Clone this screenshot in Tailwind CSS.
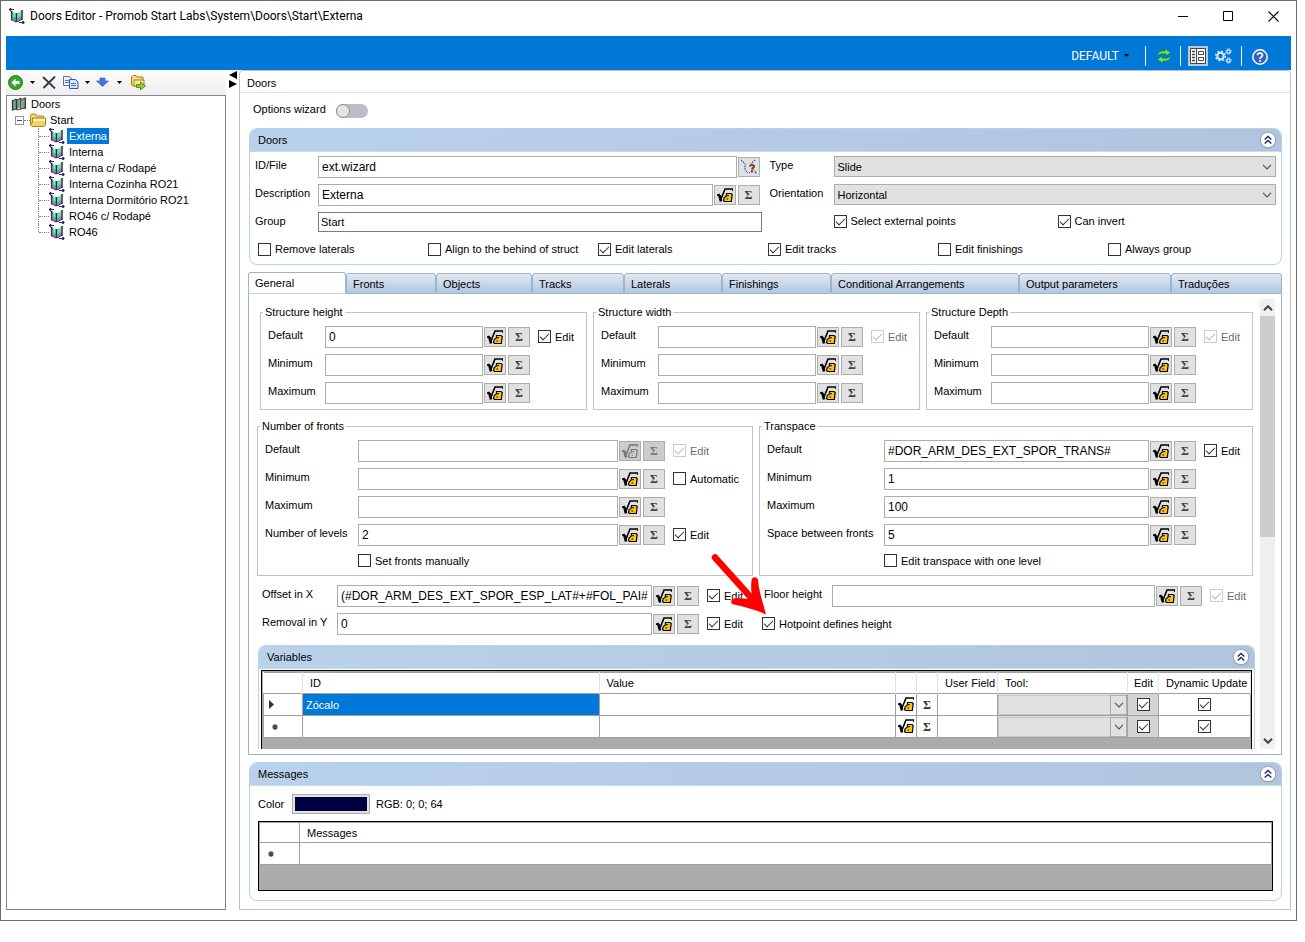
<!DOCTYPE html>
<html lang="en">
<head>
  <meta charset="UTF-8" />
  <meta name="viewport" content="width=device-width, initial-scale=1.0"/>
  <title>Doors Editor</title>
  <script src="https://cdn.jsdelivr.net/npm/@tailwindcss/browser@4"></script>
</head>
<body class="bg-white text-black font-['Liberation_Sans',Arial,sans-serif] text-[11px] leading-[14px] [&_input[type=checkbox]]:appearance-none [&_input[type=checkbox]]:size-[13px] [&_input[type=checkbox]]:shrink-0 [&_input[type=checkbox]]:border [&_input[type=checkbox]]:border-[#333] [&_input[type=checkbox]]:bg-white [&_input[type=checkbox]]:grid [&_input[type=checkbox]]:justify-center [&_input[type=checkbox]:disabled]:border-[#ccc] [&_input[type=checkbox]:checked]:before:content-[''] [&_input[type=checkbox]:checked]:before:block [&_input[type=checkbox]:checked]:before:w-[9px] [&_input[type=checkbox]:checked]:before:h-[5px] [&_input[type=checkbox]:checked]:before:mt-[2px] [&_input[type=checkbox]:checked]:before:border-l [&_input[type=checkbox]:checked]:before:border-b [&_input[type=checkbox]:checked]:before:border-[#333] [&_input[type=checkbox]:checked:disabled]:before:border-[#bbb] [&_input[type=checkbox]:checked]:before:-rotate-45">

  <!-- shared icons -->
  <svg class="hidden">
    <symbol id="door" viewBox="0 0 16 16">
      <path d="M3 3.500l4 2v8l-4-2zM8 5.500l4.500-3v8.500L8 14z" fill="#4df0c0"/>
      <path d="M4 9l3 1v3.500l-3-2zM9 10l3.500-2.500V11L9 13.500z" fill="#45a5e0"/>
      <path d="M2.700 3v9.500M7.500 5v9M13 2v10" stroke="#7a1216" stroke-width="1.500" fill="none"/>
      <path d="M3 12l4 2M8 14l5-3" stroke="#7a1216"/>
      <path d="M0 1.500h5M2 0L.5 1.500 2 3M10 14.500h5.500M13.500 13l1.500 1.500-1.500 1.500" stroke="#10208a" stroke-width="1.200" fill="none"/>
    </symbol>
    <symbol id="root" viewBox="0 0 16 16">
      <path d="M2 4l3-1v10l-3 1zM6 4l3-2v10l-3 1zM11 3l3-1v10l-3 1z" fill="#5fae9a"/>
      <path d="M1.500 4v10.500M5.500 3v11M9.800 2v11M14.300 1.500v11.500" stroke="#6b1d1d" stroke-width="1.300"/>
      <path d="M1 5l4-2M6 4l4-2M10 4l4-2M1 14l4-1M6 14l4-1M10 13l4-1" stroke="#444" stroke-width="1"/>
    </symbol>
    <symbol id="folder" viewBox="0 0 16 14">
      <path d="M.5 12V2.500l1-1.500h4l1.500 2h6.500v2" fill="#f5d56b" stroke="#a8842a"/>
      <path d="M2.500 5h13v7l-1.500 1.500H2L.5 12 2.500 9z" fill="#f5d264" stroke="#a8842a"/>
      <path d="M3 6h12v2H3z" fill="#fdf3bd"/>
    </symbol>
    <symbol id="fx" viewBox="0 0 16 15">
      <path d="M0 7.500l2-1 2 4.500L8 1h8v2" fill="none" stroke="currentColor" stroke-width="1.600"/>
      <path d="M2.300 7L4 13.500" stroke="currentColor" stroke-width="2.600"/>
      <path d="M9.500 5.500h4.500l1.200 1-.9 7H7.500L6.500 12.500l.7-3 2-1.300z" fill="var(--tone,#ffc20e)" stroke="currentColor" stroke-width="1.200"/>
      <path d="M10.200 7.600h1.600M9.500 11h1.600" stroke="currentColor" stroke-width="1.200"/>
    </symbol>
    <symbol id="up" viewBox="0 0 18 18">
      <circle cx="9" cy="9.500" r="8" fill="#7f8aa5" opacity=".55"/>
      <circle cx="9" cy="9" r="7.700" fill="#fff" stroke="#8d93a5" stroke-width=".8"/>
      <path d="M5.700 8.500L9 5.500l3.300 3M5.700 12.500L9 9.500l3.300 3" fill="none" stroke="#1f2d6b" stroke-width="1.500"/>
    </symbol>
    <symbol id="chev" viewBox="0 0 10 6"><path d="M1 .8l4 4 4-4" fill="none" stroke="#555" stroke-width="1.200"/></symbol>
    <symbol id="caret" viewBox="0 0 5 3"><path d="M0 0h5L2.500 3z"/></symbol>
  </svg>

  <div class="mr-2 border border-[#6a6a6a] pb-[10px]">
    <!-- title bar -->
    <header class="flex h-[35px] items-center pl-2 pr-[17px] pb-[5px]">
      <svg class="size-4"><use href="#door"/></svg>
      <h1 class="ml-[5px] flex-1 font-[Roboto,sans-serif] text-[12px] leading-4">Doors Editor - Promob Start Labs\System\Doors\Start\Externa</h1>
      <div class="flex items-center gap-[35px]">
        <button aria-label="Minimize"><svg class="h-[11px] w-[10px]" viewBox="0 0 10 11"><path d="M0 5.500h10" stroke="#000"/></svg></button>
        <button aria-label="Maximize"><svg class="h-[11px] w-[10px]" viewBox="0 0 10 11"><path d="M.5.5h9v9h-9z" fill="none" stroke="#000"/></svg></button>
        <button aria-label="Close"><svg class="h-[11px] w-[11px]" viewBox="0 0 11 11"><path d="M.5.5l10 10M10.500.5l-10 10" stroke="#000" stroke-width="1.100"/></svg></button>
      </div>
    </header>

    <div class="ml-[5px] mr-[5px] flex h-[34px] items-center justify-end bg-[#0078d7] pr-[23px] pt-[5px] text-white">
      <button class="flex items-center gap-[5px] font-[Roboto,sans-serif] text-[12px]">DEFAULT <svg class="h-[3px] w-[5px] text-black"><use href="#caret"/></svg></button>
      <span class="ml-4 h-5 w-px bg-white"></span>
      <button aria-label="Refresh" class="ml-[10px]"><svg class="size-4" viewBox="0 0 16 16"><path d="M1.500 7.500C2 3.500 5 2.500 9 3V.8L14.500 4.500 10 8V6C7 5.500 4 5.500 1.500 7.500z" fill="#6fe05a" stroke="#1f8a2a" stroke-width=".8"/><path d="M14.500 8.500c-.5 4-3.500 5-7.500 4.500v2.200L1.500 11.500 6 8v2c3 .5 6 .5 8.500-1.500z" fill="#6fe05a" stroke="#1f8a2a" stroke-width=".8"/></svg></button>
      <span class="ml-2 h-5 w-px bg-white"></span>
      <button aria-label="Layout" class="ml-[7px] bg-[#bccbd9] p-[2px]"><svg class="size-4" viewBox="0 0 16 16"><path d="M.5.5h15v15H.5z" fill="#fff" stroke="#444"/><path d="M6.500 1v14M8.500 3.500h5v3h-5zM8.500 9.500h5v3h-5z" fill="none" stroke="#444"/><path d="M2 3.500h3M2 6.500h3M2 9.500h3M2 12.500h3" stroke="#444" stroke-width="1.400"/></svg></button>
      <button aria-label="Settings" class="ml-[7px]"><svg class="h-4 w-[17px]" viewBox="0 0 17 16" fill="none" stroke="#dfe9f5"><circle cx="5.500" cy="8" r="3.200" stroke-width="2"/><circle cx="5.500" cy="8" r="4.800" stroke-width="1.600" stroke-dasharray="1.900 1.870"/><circle cx="13.500" cy="3.500" r="1.700" stroke-width="1.200"/><circle cx="13.500" cy="3.500" r="2.700" stroke-width="1" stroke-dasharray="1.100 1.020"/><circle cx="13.500" cy="12.500" r="1.700" stroke-width="1.200"/><circle cx="13.500" cy="12.500" r="2.700" stroke-width="1" stroke-dasharray="1.100 1.020"/></svg></button>
      <span class="ml-[9px] h-5 w-px bg-white"></span>
      <button aria-label="Help" class="ml-[10px] mt-[2px]"><svg class="size-4" viewBox="0 0 16 16"><circle cx="8" cy="8" r="7.200" fill="#3560c8" stroke="#fff" stroke-width="1.500"/><path d="M5.500 6.300C5.500 3.300 10.500 3.300 10.500 6.200 10.500 8 8 8 8 10" fill="none" stroke="#fff" stroke-width="1.700"/><circle cx="8" cy="12" r="1.100" fill="#fff"/></svg></button>
    </div>

    <div class="mx-[5px] flex">
      <!-- tree -->
      <aside class="flex w-[220px] shrink-0 flex-col">
        <div class="flex h-[25px] items-center bg-linear-to-b from-[#fcfcfc] to-[#eee] pb-px pl-[2px]">
          <button aria-label="Back"><svg class="size-[15px]" viewBox="0 0 15 15"><circle cx="7.500" cy="7.500" r="7" fill="#3aa52c" stroke="#2a7a22"/><path d="M7.500 3.500l-4 4 4 4V9h4V6h-4z" fill="#fff"/></svg></button>
          <svg class="ml-[7px] h-[3px] w-[5px]"><use href="#caret"/></svg>
          <button aria-label="Delete" class="ml-[7px]"><svg class="h-[13px] w-[14px]" viewBox="0 0 14 13"><path d="M1 1l12 11.500M13 .5L1.500 12" stroke="#3a3a44" stroke-width="1.900"/></svg></button>
          <button aria-label="Copy" class="ml-[7px]"><svg class="h-[13px] w-4" viewBox="0 0 16 13"><path d="M.5.500h6l2 2v7h-8z" fill="#eaf2fd" stroke="#5478b4"/><path d="M2 4.500h5M2 6.500h5" stroke="#5478b4"/><path d="M6.500 3.500h6l2.500 2.500v6.500H6.500z" fill="#d6e6fb" stroke="#35599c"/><path d="M8 7.500h5M8 9.500h5" stroke="#5478b4"/></svg></button>
          <svg class="ml-[6px] h-[3px] w-[5px]"><use href="#caret"/></svg>
          <button aria-label="Move down" class="ml-[6px]"><svg class="h-[10px] w-[13px]" viewBox="0 0 13 10"><path d="M4 1h5v3h3.500l-6 5.500L.5 4H4z" fill="#3f78dc" stroke="#2d55b0" stroke-width=".6"/></svg></button>
          <svg class="ml-[8px] h-[3px] w-[5px]"><use href="#caret"/></svg>
          <button aria-label="Export" class="ml-[9px]"><svg class="size-[15px]" viewBox="0 0 15 15"><path d="M.500 10V2L2 .5h3l1 1.500h6v9H2z" fill="#f7dc77" stroke="#a57f25"/><path d="M3 5h10v6H3z" fill="#fbe99c" stroke="#a57f25"/><path d="M5.500 9.500h4V7l5 4-5 4v-2.500h-4z" fill="#8ad02c" stroke="#3f7a14" stroke-width=".8"/></svg></button>
        </div>
        <nav class="flex-1 border border-[#828790] bg-white pl-[4px] leading-4">
          <div class="flex items-center gap-1"><svg class="size-4"><use href="#root"/></svg>Doors</div>
          <div class="flex items-center pl-1">
            <span class="grid size-[9px] place-items-center border border-[#919191] bg-white"><span class="h-px w-[5px] bg-[#3b4b9b]"></span></span>
            <span class="w-[6px] border-t border-dotted border-[#808080]"></span>
            <svg class="h-[14px] w-4"><use href="#folder"/></svg>
            <span class="ml-1">Start</span>
          </div>
          <ul id="tree" class="ml-[27px]"></ul>
        </nav>
      </aside>

      <div class="flex w-[13px] shrink-0 flex-col items-center gap-px pt-px">
        <button aria-label="Collapse left"><svg class="size-2" viewBox="0 0 8 8"><path d="M8 0v8L0 4z"/></svg></button>
        <button aria-label="Collapse right"><svg class="size-2" viewBox="0 0 8 8"><path d="M0 0v8l8-4z"/></svg></button>
      </div>

      <main class="min-w-0 flex-1 rounded-t border border-[#c0c0c0] pb-[8px]">
        <h2 class="h-[22px] border-b border-[#e0e0e0] pl-[7px] pt-[5px]">Doors</h2>

        <div class="pl-[9px] pr-2">
          <div class="flex h-[35px] items-center gap-[10px] pl-1">
            <span id="wiz" class="pb-[3px]">Options wizard</span>
            <button role="switch" aria-checked="false" aria-labelledby="wiz" class="h-[14px] w-8 rounded-full bg-[#bcbdca]"><span class="block size-[14px] rounded-full border border-[#8a8a8a] bg-[#e4e4e4]"></span></button>
          </div>

          <section class="rounded-lg border border-[#b7d0ec]">
            <h3 class="flex h-[23px] items-center justify-between rounded-t-[7px] border-b border-[#c9daee] bg-linear-to-r from-[#bad1ec] to-[#b0c4de] pl-2 pr-1">Doors <button aria-label="Collapse"><svg class="size-[18px]"><use href="#up"/></svg></button></h3>
            <div class="grid grid-cols-2 gap-x-2 gap-y-[6px] pl-[5px] pr-[5px] pt-1">
              <div class="flex h-[22px] items-center pr-[2px]">
                <label for="file" class="w-[63px] self-start leading-[18px]">ID/File</label>
                <input id="file" type="text" value="ext.wizard" class="h-[22px] min-w-0 flex-1 border border-[#abadb3] pl-[3px] text-[12px]">
                <button aria-label="Points" class="ml-px grid h-5 w-[22px] place-items-center border border-[#adadad] bg-[#e1e1e1]"><svg class="size-4" viewBox="0 0 16 16" fill="none"><path d="M0 1l4 4v6l3 3M14 1l-4 4M14 14l2-2" stroke="#2d5fd0" stroke-width="1.300" stroke-dasharray="1.500 1"/><path d="M8 14l4-4 4 5" stroke="#2d5fd0" stroke-dasharray="1.500 1"/><path d="M9 7.500c0-2 4-2 4 0 0 1.500-2 1.200-2 3M11 11.500v2" stroke="#8a3d12" stroke-width="2"/></svg></button>
              </div>
              <div class="flex h-[22px] items-start">
                <label for="type" class="w-16 leading-[18px]">Type</label>
                <div class="relative flex-1"><select id="type" class="h-[21px] w-full appearance-none border border-[#adadad] bg-[#e1e1e1] pl-[3px]"><option>Slide</option></select><svg class="pointer-events-none absolute right-1 top-2 h-[6px] w-[10px]"><use href="#chev"/></svg></div>
              </div>
              <div class="flex h-[22px] items-center pr-[2px]">
                <label for="desc" class="w-[63px] self-start leading-[18px]">Description</label>
                <input id="desc" type="text" value="Externa" class="h-[22px] min-w-0 flex-1 border border-[#abadb3] pl-[3px] text-[12px]">
                <span data-formula class="flex"></span>
              </div>
              <div class="flex h-[22px] items-start">
                <label for="orient" class="w-16 leading-[18px]">Orientation</label>
                <div class="relative flex-1"><select id="orient" class="h-[21px] w-full appearance-none border border-[#adadad] bg-[#e1e1e1] pl-[3px]"><option>Horizontal</option></select><svg class="pointer-events-none absolute right-1 top-2 h-[6px] w-[10px]"><use href="#chev"/></svg></div>
              </div>
              <div class="flex h-5 items-center">
                <label for="group" class="w-[63px] self-start leading-[18px]">Group</label>
                <input id="group" type="text" value="Start" class="h-5 min-w-0 flex-1 border border-[#7a7a7a] pl-[2px]">
              </div>
              <div class="flex h-[18px] items-center pl-16">
                <label class="flex w-[224px] items-center gap-1"><input type="checkbox" checked>Select external points</label>
                <label class="flex items-center gap-1"><input type="checkbox" checked>Can invert</label>
              </div>
            </div>
            <div class="mt-[10px] grid grid-cols-6 pb-2 pl-2 pr-[3px]">
              <label class="flex items-center gap-1"><input type="checkbox">Remove laterals</label>
              <label class="flex items-center gap-1 whitespace-nowrap"><input type="checkbox">Align to the behind of struct</label>
              <label class="flex items-center gap-1"><input type="checkbox" checked>Edit laterals</label>
              <label class="flex items-center gap-1"><input type="checkbox" checked>Edit tracks</label>
              <label class="flex items-center gap-1"><input type="checkbox">Edit finishings</label>
              <label class="flex items-center gap-1"><input type="checkbox">Always group</label>
            </div>
          </section>

          <!-- tabs -->
          <div role="tablist" class="-ml-px mt-[7px] flex h-[22px] items-end [&>button]:rounded-t-[3px] [&>button]:border [&>button]:border-[#9cb3d0] [&>button]:pl-[6px] [&>button]:text-left">
            <button role="tab" aria-selected="true" class="h-[22px] w-[98px] border-b-[#c5d5e8]! bg-white">General</button>
            <button role="tab" class="h-[21px] w-[90px] bg-linear-to-b from-[#e4e8ee] to-[#b0c7e4]">Fronts</button>
            <button role="tab" class="h-[21px] w-[96px] bg-linear-to-b from-[#e4e8ee] to-[#b0c7e4]">Objects</button>
            <button role="tab" class="h-[21px] w-[92px] bg-linear-to-b from-[#e4e8ee] to-[#b0c7e4]">Tracks</button>
            <button role="tab" class="h-[21px] w-[98px] bg-linear-to-b from-[#e4e8ee] to-[#b0c7e4]">Laterals</button>
            <button role="tab" class="h-[21px] w-[109px] bg-linear-to-b from-[#e4e8ee] to-[#b0c7e4]">Finishings</button>
            <button role="tab" class="h-[21px] w-[188px] bg-linear-to-b from-[#e4e8ee] to-[#b0c7e4]">Conditional Arrangements</button>
            <button role="tab" class="h-[21px] w-[152px] bg-linear-to-b from-[#e4e8ee] to-[#b0c7e4]">Output parameters</button>
            <button role="tab" class="h-[21px] flex-1 bg-linear-to-b from-[#e4e8ee] to-[#b0c7e4]">Traduções</button>
          </div>

          <div class="-ml-px flex border border-t-0 border-[#9cb3d0] pb-[5px] pr-[6px]">
            <div class="min-w-0 flex-1 pt-[11px]">
              <div class="grid grid-cols-3 gap-[6px] pl-[11px] pr-[7px]">
                <fieldset class="min-w-0 border border-[#c0c4c9] pb-[5px] pl-[7px]">
                  <legend class="-ml-[5px] px-[2px]">Structure height</legend>
                  <div data-rows="height" class="flex flex-col gap-[6px] pt-[7px]"></div>
                </fieldset>
                <fieldset class="min-w-0 border border-[#c0c4c9] pb-[5px] pl-[7px]">
                  <legend class="-ml-[5px] px-[2px]">Structure width</legend>
                  <div data-rows="width" class="flex flex-col gap-[6px] pt-[7px]"></div>
                </fieldset>
                <fieldset class="min-w-0 border border-[#c0c4c9] pb-[5px] pl-[7px]">
                  <legend class="-ml-[5px] px-[2px]">Structure Depth</legend>
                  <div data-rows="depth" class="flex flex-col gap-[6px] pt-[7px]"></div>
                </fieldset>
              </div>

              <div class="mt-[9px] grid grid-cols-[496fr_494fr] gap-[6px] pl-2 pr-[7px]">
                <fieldset class="min-w-0 border border-[#c0c4c9] pb-2 pl-[7px]">
                  <legend class="-ml-[5px] px-[2px]">Number of fronts</legend>
                  <div data-rows="fronts" class="flex flex-col gap-[6px] pt-[7px]"></div>
                  <label class="ml-[93px] mt-2 flex h-[13px] items-center gap-1"><input type="checkbox">Set fronts manually</label>
                </fieldset>
                <fieldset class="min-w-0 border border-[#c0c4c9] pb-2 pl-[7px]">
                  <legend class="-ml-[5px] px-[2px]">Transpace</legend>
                  <div data-rows="transpace" class="flex flex-col gap-[6px] pt-[7px]"></div>
                  <label class="ml-[117px] mt-2 flex h-[13px] items-center gap-1"><input type="checkbox">Edit transpace with one level</label>
                </fieldset>
              </div>

              <div class="mt-[9px] grid grid-cols-[496fr_494fr] gap-[6px] pl-2 pr-[7px]">
                <div data-rows="offset" class="flex flex-col gap-[6px] pl-[5px]"></div>
                <div class="relative">
                  <div data-rows="floor" class="pl-[5px]"></div>
                  <label class="ml-[3px] mt-[6px] flex h-[21px] items-center gap-1"><input type="checkbox" checked>Hotpoint defines height</label>
                  <!-- pointer to the height option -->
                  <svg class="pointer-events-none absolute -left-[50px] -top-[33px] h-16 w-[60px]" viewBox="0 0 60 64"><path d="M6 5.500L46 50" stroke="#f00" stroke-width="6.500" stroke-linecap="round"/><path d="M57 62.500C48 58 36 55 25 52.500a3 3 0 0 1 .5-6C31 46 36 47 40 47L43 43C42 39 42 33 42.500 28a3.300 3.300 0 0 1 6.500 0C50 40 54 51 57 62.500z" fill="#f00"/></svg>
                </div>
              </div>

              <section class="ml-[9px] mr-[5px] mt-[10px] rounded-t-lg border border-b-0 border-[#b7d0ec]">
                <h3 class="flex h-[23px] items-center justify-between rounded-t-[7px] border-b border-[#c9daee] bg-linear-to-r from-[#bad1ec] to-[#b0c4de] pl-2 pr-1">Variables <button aria-label="Collapse"><svg class="size-[18px]"><use href="#up"/></svg></button></h3>
                <div class="ml-[2px] mr-[2px] mt-px border border-b-0 border-black bg-[#ababab] pl-px pt-px pb-[11px]">
                  <table class="w-full table-fixed border-collapse bg-white [&_td]:border [&_td]:border-[#a0a0a0] [&_td]:p-0 [&_th]:h-[21px] [&_th]:border-r [&_th]:border-[#e3e3e3] [&_th]:p-0 [&_th]:text-left [&_th]:font-normal">
                    <colgroup><col class="w-[39px]"><col><col><col class="w-[21px]"><col class="w-[21px]"><col class="w-[60px]"><col class="w-[130px]"><col class="w-[31px]"><col class="w-[92px]"></colgroup>
                    <thead><tr class="border-t border-[#a0a0a0]"><th></th><th><span class="pl-[7px]">ID</span></th><th><span class="pl-[7px]">Value</span></th><th></th><th></th><th class="whitespace-nowrap"><span class="pl-[7px]">User Field</span></th><th><span class="pl-[7px]">Tool:</span></th><th><span class="pl-[6px]">Edit</span></th><th class="whitespace-nowrap"><span class="pl-[7px]">Dynamic Update</span></th></tr></thead>
                    <tbody id="vars"></tbody>
                  </table>
                </div>
              </section>
            </div>

            <!-- scroll bar -->
            <div class="mt-[5px] flex w-[15px] shrink-0 flex-col items-center bg-[#f0f0f0]">
              <button aria-label="Scroll up" class="grid h-[17px] place-items-center"><svg class="h-[6px] w-[10px] rotate-180" viewBox="0 0 10 6"><path d="M1 .8l4 4 4-4" fill="none" stroke="#444" stroke-width="2"/></svg></button>
              <div class="h-[221px] w-full bg-[#cdcdcd]"></div>
              <button aria-label="Scroll down" class="mt-auto grid h-[17px] place-items-center"><svg class="h-[6px] w-[10px]" viewBox="0 0 10 6"><path d="M1 .8l4 4 4-4" fill="none" stroke="#444" stroke-width="2"/></svg></button>
            </div>
          </div>

          <section class="mt-[7px] rounded-lg border border-[#b7d0ec] pb-[9px]">
            <h3 class="flex h-[23px] items-center justify-between rounded-t-[7px] border-b border-[#c9daee] bg-linear-to-r from-[#bad1ec] to-[#b0c4de] pl-2 pr-1">Messages <button aria-label="Collapse"><svg class="size-[18px]"><use href="#up"/></svg></button></h3>
            <div class="flex h-[35px] items-center pl-2">
              <span class="w-[34px]">Color</span>
              <button aria-label="Message color" class="h-5 w-[78px] border border-[#adadad] bg-[#e1e1e1] p-[2px]"><span class="block h-[14px] bg-[#000040]"></span></button>
              <span class="ml-[6px]">RGB: 0; 0; 64</span>
            </div>
            <div class="ml-2 mr-2 border border-black bg-[#ababab] pb-[25px]">
              <table class="w-full table-fixed border-collapse bg-white [&_td]:h-[22px] [&_td]:border [&_td]:border-[#a0a0a0] [&_td]:p-0 [&_th]:h-[20px] [&_th]:border [&_th]:border-[#a0a0a0] [&_th]:p-0 [&_th]:text-left [&_th]:font-normal">
                <colgroup><col class="w-[40px]"><col></colgroup>
                <thead><tr><th></th><th><span class="pl-[7px]">Messages</span></th></tr></thead>
                <tbody><tr><td><svg class="ml-[8px] size-[6px]" viewBox="0 0 6 6"><path d="M3 0v6M0 3h6M1 1l4 4M5 1L1 5" stroke="#444" stroke-width="1.200"/></svg></td><td></td></tr></tbody>
              </table>
            </div>
          </section>
        </div>
      </main>
    </div>
  </div>

  <script>
    // Formula and sum buttons that follow most fields
    function formula(off) {
      const look = off ? "bg-[#ccc] text-[#777] [--tone:#ccc]" : "bg-[#e1e1e1]";
      return `
        <button aria-label="Formula" class="ml-px grid h-5 w-[22px] shrink-0 place-items-center border border-[#adadad] ${look}" ${off ? "disabled" : ""}><svg class="h-[15px] w-4"><use href="#fx"/></svg></button>
        <button aria-label="Sum" class="ml-[2px] h-5 w-[22px] shrink-0 border border-[#adadad] ${look} font-['Liberation_Serif',serif] text-[12px] font-bold text-[#444]" ${off ? "disabled" : ""}>Σ</button>`;
    }

    // state: "on", "off", "locked"
    function check(text, state) {
      if (!text) return "";
      const attrs = state === "locked" ? "checked disabled" : state === "on" ? "checked" : "";
      return `<label class="flex items-center gap-1 ${state === "locked" ? "text-[#6d6d6d]" : ""}"><input type="checkbox" ${attrs}>${text}</label>`;
    }

    // label, value, checkbox text, checkbox state, buttons disabled
    const groups = {
      height: { label: "w-[57px]", tail: "w-[48px]", rows: [["Default", "0", "Edit", "on"], ["Minimum", ""], ["Maximum", ""]] },
      width: { label: "w-[57px]", tail: "w-[48px]", rows: [["Default", "", "Edit", "locked"], ["Minimum", ""], ["Maximum", ""]] },
      depth: { label: "w-[57px]", tail: "w-[48px]", rows: [["Default", "", "Edit", "locked"], ["Minimum", ""], ["Maximum", ""]] },
      fronts: { label: "w-[93px]", tail: "w-[79px]", rows: [["Default", "", "Edit", "locked", true], ["Minimum", "", "Automatic", "off"], ["Maximum", ""], ["Number of levels", "2", "Edit", "on"]] },
      transpace: { label: "w-[117px]", tail: "w-[48px]", rows: [["Default", "#DOR_ARM_DES_EXT_SPOR_TRANS#", "Edit", "on"], ["Minimum", "1"], ["Maximum", "100"], ["Space between fronts", "5"]] },
      offset: { label: "w-[75px]", tail: "w-[46px]", rows: [["Offset in X", "(#DOR_ARM_DES_EXT_SPOR_ESP_LAT#+#FOL_PAI#)", "Edit", "on"], ["Removal in Y", "0", "Edit", "on"]] },
      floor: { label: "w-[68px]", tail: "w-[43px]", rows: [["Floor height", "", "Edit", "locked"]] }
    };

    document.querySelectorAll("[data-rows]").forEach(box => {
      const g = groups[box.dataset.rows];
      box.innerHTML = g.rows.map(([label, value, text, state, off], i) => {
        const id = box.dataset.rows + i;
        return `
          <div class="flex h-[22px] items-center">
            <label for="${id}" class="${g.label} shrink-0 self-start whitespace-nowrap leading-[18px]">${label}</label>
            <input id="${id}" type="text" value="${value}" class="h-[22px] min-w-0 flex-1 border border-[#abadb3] pl-[3px] pr-[3px] text-[12px]">
            ${formula(off)}
            <div class="${g.tail} ml-2 shrink-0 pb-px">${check(text, state)}</div>
          </div>`;
      }).join("");
    });

    document.querySelectorAll("[data-formula]").forEach(el => { el.innerHTML = formula(false); });

    // Tree
    const doors = ["Externa", "Interna", "Interna c/ Rodapé", "Interna Cozinha RO21", "Interna Dormitório RO21", "RO46 c/ Rodapé", "RO46"];
    document.getElementById("tree").innerHTML = doors.map((name, i) => `
      <li class="flex h-4 items-center">
        <span class="${i === doors.length - 1 ? "h-2 self-start" : "h-4"} border-l border-dotted border-[#808080]"></span>
        <span class="w-[10px] border-t border-dotted border-[#808080]"></span>
        <svg class="size-4"><use href="#door"/></svg>
        <a href="#" class="ml-[2px] px-[2px] leading-4 ${i === 0 ? "bg-[#0078d7] text-white" : ""}">${name}</a>
      </li>`).join("");

    // Variables table
    const marks = [
      `<svg class="ml-[5px] h-[9px] w-[5px]" viewBox="0 0 5 9"><path d="M0 0v9l5-4.500z" fill="#333"/></svg>`,
      `<svg class="ml-[8px] size-[6px]" viewBox="0 0 6 6"><path d="M3 0v6M0 3h6M1 1l4 4M5 1L1 5" stroke="#444" stroke-width="1.200"/></svg>`
    ];
    document.getElementById("vars").innerHTML = ["Zócalo", ""].map((name, i) => `
      <tr class="h-[22px]">
        <td>${marks[i]}</td>
        <td class="${name ? "bg-[#0078d7] text-white" : ""}"><span class="pl-[3px]">${name}</span></td>
        <td></td>
        <td><button aria-label="Formula" class="block"><svg class="ml-[2px] h-[15px] w-4"><use href="#fx"/></svg></button></td>
        <td class="text-center"><button aria-label="Sum" class="font-['Liberation_Serif',serif] text-[12px] font-bold text-[#333]">Σ</button></td>
        <td></td>
        <td class="bg-[#e1e1e1]"><div class="relative"><select aria-label="Tool" class="block h-[20px] w-full appearance-none border border-[#c6c6c6] bg-[#e1e1e1]"><option></option></select><span class="pointer-events-none absolute inset-y-0 right-0 grid w-[17px] place-items-center border border-[#adadad]"><svg class="h-[6px] w-[10px]"><use href="#chev"/></svg></span></div></td>
        <td class="bg-[#d4d4d4]"><input type="checkbox" aria-label="Edit" checked class="mx-auto"></td>
        <td><input type="checkbox" aria-label="Dynamic Update" checked class="mx-auto"></td>
      </tr>`).join("");
  </script>
</body>
</html>
